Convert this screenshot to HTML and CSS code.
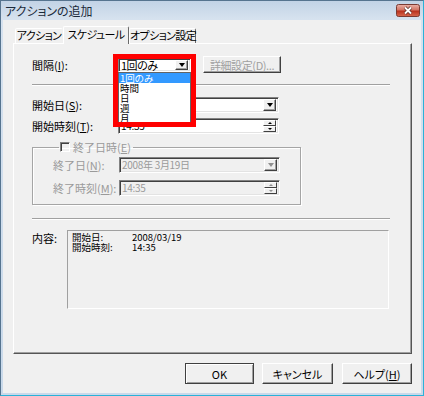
FILE: index.html
```html
<!DOCTYPE html>
<html lang="ja">
<head>
    <meta charset="UTF-8">
    <title>アクションの追加</title>
    <link rel="stylesheet" href="styles.css">
</head>
<body>

<div class="window">
    <!-- Title bar -->
    <div class="titlebar">
        <span class="title">アクションの追加</span>
        <svg class="close" width="24" height="13" viewBox="0 0 24 13">
            <defs>
                <linearGradient id="cg" x1="0" y1="0" x2="0" y2="1">
                    <stop offset="0" stop-color="#eab2a8"/>
                    <stop offset="0.45" stop-color="#d37565"/>
                    <stop offset="0.55" stop-color="#b9321e"/>
                    <stop offset="1" stop-color="#d8694f"/>
                </linearGradient>
            </defs>
            <rect x="0.5" y="0.5" width="23" height="12" rx="2" fill="url(#cg)" stroke="#7a3b33"/>
            <path d="M9 3.5 L15 9.5 M15 3.5 L9 9.5" stroke="#5a2c26" stroke-width="3.2"/>
            <path d="M9 3.5 L15 9.5 M15 3.5 L9 9.5" stroke="#fff" stroke-width="1.8"/>
        </svg>
    </div>

    <div class="client">
        <!-- Tabs -->
        <div class="tabs">
            <div class="tab tab-action">アクション</div>
            <div class="tab tab-schedule active">スケジュール</div>
            <div class="tab tab-option">オプション設定</div>
        </div>

        <div class="panel">
            <!-- Interval -->
            <div class="row row-interval">
                <span class="lbl">間隔(<u>I</u>):</span>
                <div class="combo-host">
                    <div class="field combo-small">
                        <span class="field-text">1回のみ</span>
                        <span class="drop-btn"><i class="arrow-down"></i></span>
                    </div>
                    <ul class="droplist">
                        <li class="selected">1回のみ</li>
                        <li>時間</li>
                        <li>日</li>
                        <li>週</li>
                        <li>月</li>
                    </ul>
                    <div class="highlight"></div>
                </div>
                <button class="btn btn-detail" disabled>詳細設定(<u>D</u>)...</button>
            </div>

            <div class="sep sep-top"></div>

            <!-- Start -->
            <div class="row row-start-date">
                <span class="lbl">開始日(<u>S</u>):</span>
                <div class="field wide">
                    <span class="field-text"></span>
                    <span class="drop-btn"><i class="arrow-down"></i></span>
                </div>
            </div>
            <div class="row row-start-time">
                <span class="lbl">開始時刻(<u>T</u>):</span>
                <div class="field wide">
                    <span class="field-text">14:35</span>
                    <span class="spin">
                        <span class="spin-btn"><i class="arrow-up"></i></span>
                        <span class="spin-btn"><i class="arrow-down small"></i></span>
                    </span>
                </div>
            </div>

            <!-- End group -->
            <fieldset class="group">
                <legend class="group-title">
                    <span class="checkbox"></span>
                    <span>終了日時(<u>E</u>)</span>
                </legend>
                <div class="row row-end-date">
                    <span class="lbl lbl-group">終了日(<u>N</u>):</span>
                    <div class="field wide disabled">
                        <span class="field-text">2008年 3月19日</span>
                        <span class="drop-btn"><i class="arrow-down"></i></span>
                    </div>
                </div>
                <div class="row row-end-time">
                    <span class="lbl lbl-group">終了時刻(<u>M</u>):</span>
                    <div class="field wide disabled">
                        <span class="field-text">14:35</span>
                        <span class="spin">
                            <span class="spin-btn"><i class="arrow-up"></i></span>
                            <span class="spin-btn"><i class="arrow-down small"></i></span>
                        </span>
                    </div>
                </div>
            </fieldset>

            <div class="sep sep-bottom"></div>

            <!-- Summary -->
            <div class="row-content">
                <span class="lbl lbl-content">内容:</span>
                <div class="summary">
                    <span>開始日:</span><span>2008/03/19</span>
                    <span>開始時刻:</span><span>14:35</span>
                </div>
            </div>
        </div>

        <!-- Dialog buttons -->
        <div class="buttons">
            <button class="btn btn-ok">OK</button>
            <button class="btn btn-cancel">キャンセル</button>
            <button class="btn btn-help">ヘルプ(<u>H</u>)</button>
        </div>
    </div>
</div>

</body>
</html>
```

FILE: styles.css
```css
* {
    box-sizing: border-box;
}

body {
    margin: 0;
    font-family: "Noto Sans CJK JP", "Liberation Sans", sans-serif;
    font-size: 11px;
    font-feature-settings: "palt";
    color: #000;
}

u {
    text-decoration: underline;
    text-underline-offset: 1px;
}

.window {
    width: 424px;
    height: 396px;
    display: flex;
    flex-direction: column;
    background: linear-gradient(#c2d3e6, #d6e2ef 18px, #c9d9ea);
    border: 1px solid #56748f;
    border-right-color: #2ab2d8;
    border-bottom-color: #2ab2d8;
}

/* Title bar */
.titlebar {
    height: 19px;
    display: flex;
    align-items: center;
    justify-content: space-between;
    padding: 0 3px 0 4px;
}

.title {
    font-size: 12px;
    color: #1b2a3a;
    line-height: 14px;
}

.close {
    display: block;
}

/* Client area */
.client {
    flex: 1;
    margin: 0 2px 2px 2px;
    padding: 6px 9px 0 10px;
    background-color: #f0f0f0;
}

.tabs {
    display: flex;
    align-items: flex-end;
    height: 17px;
    padding-left: 2px;
    position: relative;
    z-index: 1;
}

.tab {
    height: 15px;
    line-height: 13px;
    text-align: center;
    white-space: nowrap;
    letter-spacing: -0.6px;
    background-color: #f0f0f0;
    border: 1px solid;
    border-color: #fff #6a6a6a transparent #fff;
    border-bottom: none;
    border-radius: 2px 2px 0 0;
}

.tab-action {
    width: 48px;
    border-right-color: transparent;
}

.tab-schedule {
    width: 66px;
}

.tab-option {
    width: 67px;
}

.tab.active {
    height: 18px;
    margin-bottom: -1px;
    line-height: 15px;
}

.panel {
    width: 399px;
    height: 311px;
    padding: 0 21px 0 18px;
    border: 1px solid;
    border-color: #fff #555 #555 #fff;
    box-shadow: inset -1px -1px 0 #a0a0a0;
}

/* Rows */
.row {
    display: flex;
    align-items: center;
}

.lbl {
    flex: none;
    width: 86px;
    line-height: 12px;
    white-space: nowrap;
}

.row-interval {
    margin-top: 12px;
    height: 17px;
}

.row-start-date {
    margin-top: 11px;
}

.row-start-time {
    margin-top: 5px;
}

.sep {
    height: 2px;
    border-top: 1px solid #a0a0a0;
    border-bottom: 1px solid #fff;
}

.sep-top {
    margin-top: 11px;
}

.sep-bottom {
    margin-top: 13px;
}

/* Inputs */
.field {
    display: flex;
    align-items: center;
    justify-content: space-between;
    height: 16px;
    background-color: #fff;
    border: 1px solid;
    border-color: #828282 #fff #fff #828282;
    box-shadow: inset 1px 1px 0 #404040, inset -1px -1px 0 #e3e3e3;
    padding: 1px 2px 1px 2px;
}

.field.wide {
    width: 161px;
}

.field.disabled {
    background-color: #f0f0f0;
    color: #9a9a9a;
}

.field-text {
    line-height: 12px;
    white-space: nowrap;
    font-size: 10px;
    letter-spacing: -0.3px;
}

.drop-btn {
    flex: none;
    width: 13px;
    height: 12px;
    display: flex;
    align-items: center;
    justify-content: center;
    background-color: #f0f0f0;
    border: 1px solid;
    border-color: #fff #404040 #404040 #fff;
    box-shadow: inset -1px -1px 0 #a0a0a0;
}

.arrow-down {
    width: 0;
    height: 0;
    border-style: solid;
    border-width: 4px 3.5px 0 3.5px;
    border-color: #000 transparent transparent transparent;
}

.arrow-down.small {
    border-width: 2px 2px 0 2px;
}

.arrow-up {
    width: 0;
    height: 0;
    border-style: solid;
    border-width: 0 2px 2px 2px;
    border-color: transparent transparent #000 transparent;
}

.disabled .arrow-down,
.disabled .arrow-up {
    opacity: 0.4;
}

.spin {
    display: flex;
    flex-direction: column;
    height: 12px;
}

.spin-btn {
    width: 13px;
    height: 6px;
    display: flex;
    align-items: center;
    justify-content: center;
    background-color: #f0f0f0;
    border: 1px solid;
    border-color: #fff #404040 #404040 #fff;
}

/* Interval combo with the open list */
.combo-host {
    position: relative;
    width: 73px;
    height: 14px;
}

.combo-small {
    width: 73px;
    height: 14px;
    padding: 1px 2px 1px 2px;
}

.combo-small .field-text {
    font-size: 11px;
    letter-spacing: -0.5px;
}

.combo-small .drop-btn {
    height: 10px;
}

.droplist {
    position: absolute;
    left: 0;
    top: 14px;
    width: 73px;
    height: 51px;
    margin: 0;
    padding: 0;
    list-style: none;
    background-color: #fff;
    border: 1px solid #646464;
    z-index: 2;
}

.droplist li {
    height: 10px;
    line-height: 10px;
    padding-left: 1px;
    font-size: 9.5px;
}

.droplist li.selected {
    background-color: #3399ff;
    color: #fff;
}

.highlight {
    position: absolute;
    left: -5px;
    top: -4px;
    width: 83px;
    height: 73px;
    border: 5px solid #f00;
    z-index: 3;
}

/* Buttons */
.btn {
    font-family: inherit;
    font-size: 11px;
    font-feature-settings: "palt";
    color: #000;
    height: 21px;
    padding: 0;
    background-color: #f0f0f0;
    border: 1px solid;
    border-color: #fff #404040 #404040 #fff;
    box-shadow: inset -1px -1px 0 #a0a0a0;
    white-space: nowrap;
}

.btn:disabled {
    color: #a0a0a0;
}

.btn-detail {
    margin-left: 12px;
    width: 78px;
    height: 17px;
    letter-spacing: -0.4px;
}

.buttons {
    margin-top: 9px;
    display: flex;
    justify-content: flex-end;
    gap: 8px;
}

.btn-ok {
    width: 69px;
    border-color: #404040;
    box-shadow: inset 1px 1px 0 #fff, inset -1px -1px 0 #a0a0a0;
}

.btn-cancel {
    width: 71px;
}

.btn-help {
    width: 70px;
    margin-left: 1px;
}

/* End date group */
.group {
    margin: 7px 0 0 0;
    width: 269px;
    padding: 4px 0 8px 20px;
    border: 1px solid #a5a5a5;
    box-shadow: 1px 1px 0 #fff, inset 1px 1px 0 #fff;
}

.group-title {
    display: flex;
    align-items: center;
    gap: 3px;
    margin-left: 6px;
    padding: 0 2px 0 1px;
    color: #9a9a9a;
    line-height: 12px;
}

.checkbox {
    width: 10px;
    height: 10px;
    border: 1px solid;
    border-color: #808080 #fff #fff #808080;
    box-shadow: inset 1px 1px 0 #404040;
}

.lbl-group {
    width: 66px;
    color: #9a9a9a;
}

.row-end-time {
    margin-top: 7px;
}

/* Summary */
.row-content {
    display: flex;
    margin-top: 10px;
}

.lbl-content {
    width: 35px;
    padding-top: 2px;
}

.summary {
    width: 322px;
    height: 79px;
    padding: 1px 4px;
    font-size: 9.5px;
    border: 1px solid;
    border-color: #a0a0a0 #fff #fff #a0a0a0;
    display: grid;
    grid-template-columns: 60px auto;
    grid-auto-rows: 10px;
    line-height: 10px;
    align-content: start;
}
```
